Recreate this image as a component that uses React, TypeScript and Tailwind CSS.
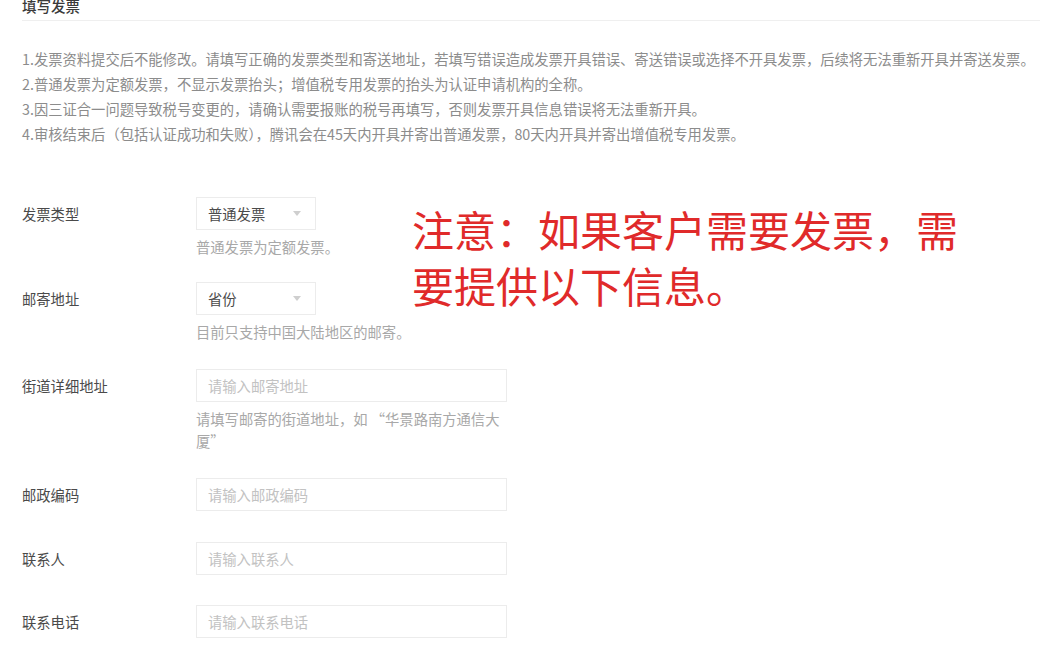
const cjk = { fontFamily: '"Noto Sans CJK SC", "Noto Sans", sans-serif' };

const notes = [
  '1.发票资料提交后不能修改。请填写正确的发票类型和寄送地址，若填写错误造成发票开具错误、寄送错误或选择不开具发票，后续将无法重新开具并寄送发票。',
  '2.普通发票为定额发票，不显示发票抬头；增值税专用发票的抬头为认证申请机构的全称。',
  '3.因三证合一问题导致税号变更的，请确认需要报账的税号再填写，否则发票开具信息错误将无法重新开具。',
  '4.审核结束后（包括认证成功和失败），腾讯会在45天内开具并寄出普通发票，80天内开具并寄出增值税专用发票。',
];

function Caret() {
  return (
    <svg width="8" height="5" viewBox="0 0 8 5" className="ml-auto">
      <path d="M0 0 L8 0 L4 5 Z" fill="#cfcfcf" />
    </svg>
  );
}

function SelectBox({ value }: { value: string }) {
  return (
    <div className="flex items-center w-[120px] h-[33px] border border-[#ececec] pl-[11px] pr-[14px] text-[14.3px] text-[#4a4a4a]">
      <span>{value}</span>
      <Caret />
    </div>
  );
}

function InputBox({ placeholder }: { placeholder: string }) {
  return (
    <div className="flex items-center w-[311px] h-[33px] border border-[#ececec] pl-[11px] text-[14.3px] text-[#c2c2c2]">
      {placeholder}
    </div>
  );
}

function Row({
  label,
  children,
  help,
  className,
}: {
  label: string;
  children: React.ReactNode;
  help?: string;
  className?: string;
}) {
  return (
    <div className={'flex ' + (className ?? '')}>
      <div className="w-[174px] h-[33px] flex items-center text-[14.3px] text-[#4a4a4a]">{label}</div>
      <div className="flex flex-col">
        {children}
        {help && (
          <div className="mt-[6px] w-[312px] text-[14.3px] leading-[22px] text-[#a8a8a8]">{help}</div>
        )}
      </div>
    </div>
  );
}

export default function App() {
  return (
    <div className="relative w-[1048px] h-[651px] overflow-hidden bg-white" style={cjk}>
      <div className="pl-[22px] pr-[8px]">
        <div className="h-[21px] border-b border-[#efefef]">
          <div className="text-[14.5px] leading-[11px] font-medium text-[#3a3a3a]">填写发票</div>
        </div>

        <div className="mt-[25px] text-[14.3px] leading-[25px] text-[#8c8c8c] whitespace-nowrap">
          {notes.map(n => (
            <div key={n}>{n}</div>
          ))}
        </div>

        <div className="mt-[51px]">
          <Row label="发票类型" help="普通发票为定额发票。">
            <SelectBox value="普通发票" />
          </Row>
          <Row label="邮寄地址" help="目前只支持中国大陆地区的邮寄。" className="mt-[24px]">
            <SelectBox value="省份" />
          </Row>
          <Row label="街道详细地址" help="请填写邮寄的街道地址，如 “华景路南方通信大厦”" className="mt-[26px]">
            <InputBox placeholder="请输入邮寄地址" />
          </Row>
          <Row label="邮政编码" className="mt-[26px]">
            <InputBox placeholder="请输入邮政编码" />
          </Row>
          <Row label="联系人" className="mt-[31px]">
            <InputBox placeholder="请输入联系人" />
          </Row>
          <Row label="联系电话" className="mt-[30px]">
            <InputBox placeholder="请输入联系电话" />
          </Row>
        </div>
      </div>

      <div className="absolute left-[412px] top-[201px] text-[42px] leading-[56px] text-[#e02a2a] whitespace-nowrap">
        注意：如果客户需要发票，需
        <br />
        要提供以下信息。
      </div>
    </div>
  );
}
